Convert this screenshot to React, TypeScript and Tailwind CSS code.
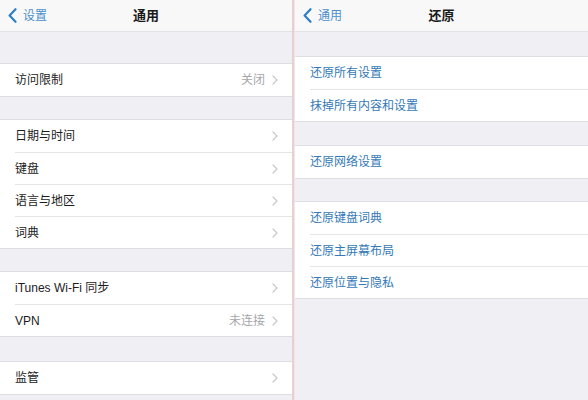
import React from "react";

type Row = { label: string; value?: string; chevron?: boolean };

const FONT = "font-['Helvetica_Neue','Liberation_Sans','Noto_Sans_CJK_SC',sans-serif]";

function Chevron({ className = "" }: { className?: string }) {
  return (
    <svg width="6" height="10" viewBox="0 0 6 10" className={className}>
      <path d="M1 1 L5 5 L1 9" fill="none" stroke="currentColor" strokeWidth="1.2" strokeLinecap="round" strokeLinejoin="round" />
    </svg>
  );
}

function BackChevron() {
  return (
    <svg width="9" height="15" viewBox="0 0 9 15" className="text-[#2f7fc6]">
      <path d="M7.5 1.2 L1.6 7.5 L7.5 13.8" fill="none" stroke="currentColor" strokeWidth="2.2" strokeLinecap="round" strokeLinejoin="round" />
    </svg>
  );
}

function NavBar({ back, title }: { back: string; title: string }) {
  return (
    <div className="relative flex h-[32px] items-center border-b border-[#e2e2e6] bg-[#f8f8f8]">
      <div className="flex items-center gap-[6px] pl-[8px]">
        <BackChevron />
        <span className="text-[12px] text-[#4a90cc]">{back}</span>
      </div>
      <div className="pointer-events-none absolute inset-x-0 text-center text-[13px] font-semibold text-[#1a1a1a]">{title}</div>
    </div>
  );
}

function Group({ rows, blue = false }: { rows: Row[]; blue?: boolean }) {
  return (
    <div className="border-y border-[#dedee2] bg-white">
      {rows.map((row, i) => (
        <div key={row.label} className="flex h-[32px] items-stretch pl-[15px]">
          <div className={`flex flex-1 items-center pr-[14px] ${i > 0 ? "border-t border-[#e4e4e7]" : ""}`}>
            <span className={`flex-1 text-[12px] ${blue ? "text-[#3479b6]" : "text-[#1c1c1c]"}`}>{row.label}</span>
            {row.value && <span className="mr-[7px] text-[12px] text-[#a6a6aa]">{row.value}</span>}
            {row.chevron && <Chevron className="text-[#c8c8cc]" />}
          </div>
        </div>
      ))}
    </div>
  );
}

export default function App() {
  return (
    <div className={`flex h-[400px] w-[588px] overflow-hidden bg-[#efeff4] ${FONT}`}>
      <div className="flex w-[292px] flex-col bg-[#efeff4]">
        <NavBar back="设置" title="通用" />
        <div className="h-[31px]" />
        <Group rows={[{ label: "访问限制", value: "关闭", chevron: true }]} />
        <div className="h-[22px]" />
        <Group
          rows={[
            { label: "日期与时间", chevron: true },
            { label: "键盘", chevron: true },
            { label: "语言与地区", chevron: true },
            { label: "词典", chevron: true },
          ]}
        />
        <div className="h-[22px]" />
        <Group
          rows={[
            { label: "iTunes Wi-Fi 同步", chevron: true },
            { label: "VPN", value: "未连接", chevron: true },
          ]}
        />
        <div className="h-[24px]" />
        <Group rows={[{ label: "监管", chevron: true }]} />
      </div>
      <div className="w-[2px] bg-[#e9cfd2]" />
      <div className="flex flex-1 flex-col border-l border-[#f3e6e8] bg-[#efeff4]">
        <NavBar back="通用" title="还原" />
        <div className="h-[24px]" />
        <Group blue rows={[{ label: "还原所有设置" }, { label: "抹掉所有内容和设置" }]} />
        <div className="h-[23px]" />
        <Group blue rows={[{ label: "还原网络设置" }]} />
        <div className="h-[22px]" />
        <Group blue rows={[{ label: "还原键盘词典" }, { label: "还原主屏幕布局" }, { label: "还原位置与隐私" }]} />
      </div>
    </div>
  );
}
